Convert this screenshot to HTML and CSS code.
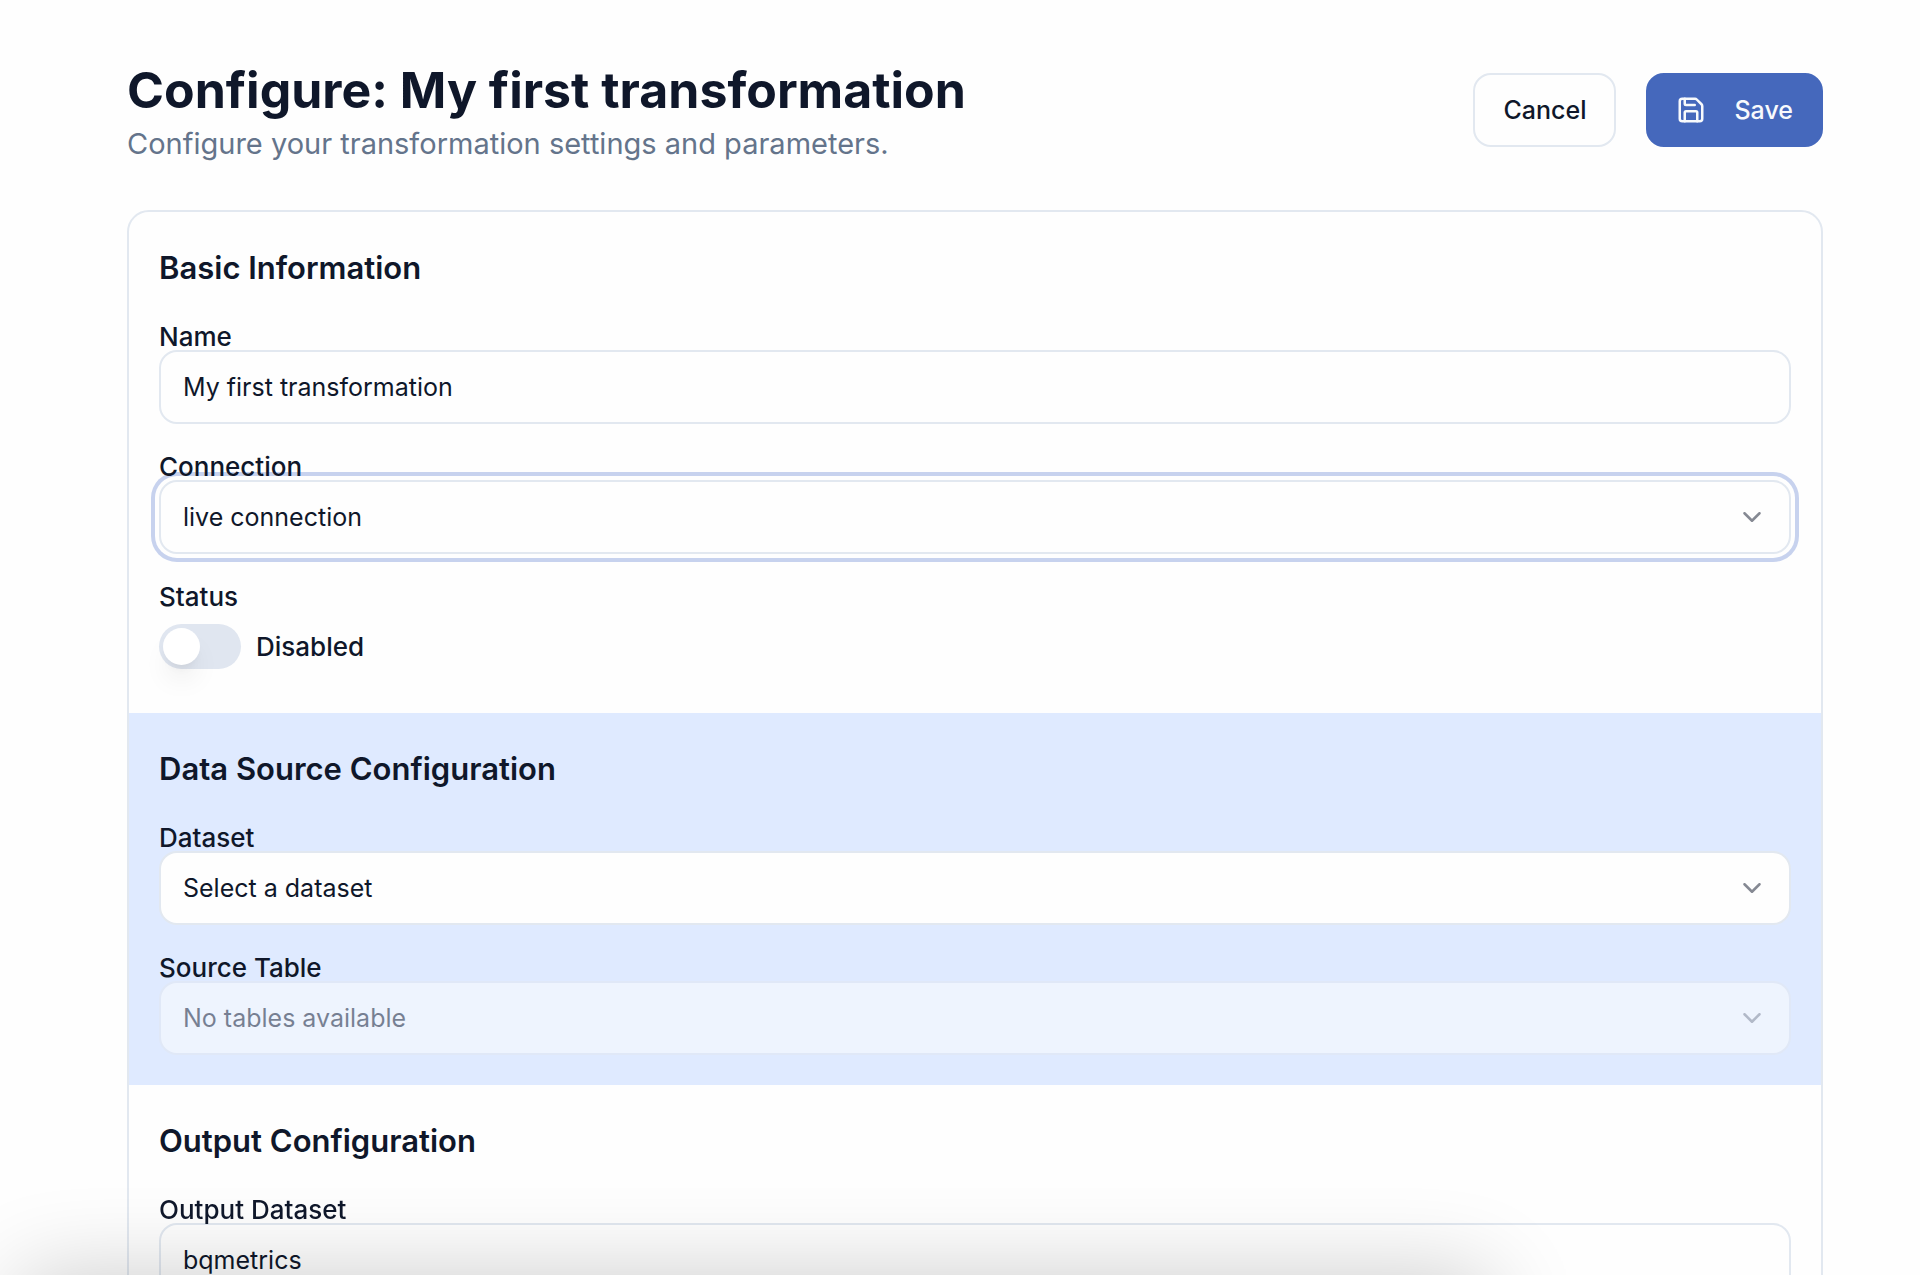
FILE: index.html
```html
<!DOCTYPE html>
<html lang="en">
<head>
  <meta charset="UTF-8" />
  <title>Configure: My first transformation</title>
  <meta name="viewport" content="width=device-width, initial-scale=1.0" />
  <link rel="stylesheet" href="styles.css">
</head>
<body>
  <main class="page">
    <header class="page-header">
      <div class="page-title">
        <h1>Configure: My first transformation</h1>
        <p>Configure your transformation settings and parameters.</p>
      </div>
      <div class="actions">
        <button type="button" class="btn btn-outline">Cancel</button>
        <button type="submit" form="config-form" class="btn btn-primary">
          <svg class="icon" viewBox="0 0 24 24" aria-hidden="true">
            <path d="M15.2 3a2 2 0 0 1 1.4.6l3.8 3.8a2 2 0 0 1 .6 1.4V19a2 2 0 0 1-2 2H5a2 2 0 0 1-2-2V5a2 2 0 0 1 2-2z" />
            <path d="M17 21v-7a1 1 0 0 0-1-1H8a1 1 0 0 0-1 1v7" />
            <path d="M7 3v4a1 1 0 0 0 1 1h7" />
          </svg>
          Save
        </button>
      </div>
    </header>

    <form id="config-form" class="card">
      <section class="section">
        <h2>Basic Information</h2>
        <div class="field">
          <label for="name">Name</label>
          <input type="text" id="name" class="control" value="My first transformation" />
        </div>
        <div class="field">
          <label for="connection">Connection</label>
          <div class="select">
            <select id="connection" class="control active">
              <option>live connection</option>
            </select>
            <svg class="icon chevron" viewBox="0 0 24 24" aria-hidden="true"><path d="m6 9 6 6 6-6" /></svg>
          </div>
        </div>
        <div class="field">
          <label for="status">Status</label>
          <div class="switch-row">
            <input type="checkbox" role="switch" id="status" class="switch" />
            <label for="status">Disabled</label>
          </div>
        </div>
      </section>

      <section class="section section-blue">
        <h2>Data Source Configuration</h2>
        <div class="field">
          <label for="dataset">Dataset</label>
          <div class="select">
            <select id="dataset" class="control">
              <option>Select a dataset</option>
            </select>
            <svg class="icon chevron" viewBox="0 0 24 24" aria-hidden="true"><path d="m6 9 6 6 6-6" /></svg>
          </div>
        </div>
        <div class="field">
          <label for="source-table">Source Table</label>
          <div class="select select-disabled">
            <select id="source-table" class="control" disabled>
              <option>No tables available</option>
            </select>
            <svg class="icon chevron" viewBox="0 0 24 24" aria-hidden="true"><path d="m6 9 6 6 6-6" /></svg>
          </div>
        </div>
      </section>

      <section class="section">
        <h2>Output Configuration</h2>
        <div class="field">
          <label for="output-dataset">Output Dataset</label>
          <input type="text" id="output-dataset" class="control" value="bqmetrics" />
        </div>
      </section>
    </form>
  </main>
  <div class="bottom-shadow"></div>
</body>
</html>
```
FILE: styles.css
```css
* {
  box-sizing: border-box;
}

body {
  margin: 0;
  height: 100vh;
  overflow: hidden;
  background-color: #fefefe;
  color: #0f172a;
  font-family: Inter, "Liberation Sans", sans-serif;
  font-size: 25px;
}

h1, h2, p {
  margin: 0;
}

.page {
  padding: 60px 97px 60px 127px;
}

.page-header {
  display: flex;
  justify-content: space-between;
  align-items: center;
  margin-bottom: 50px;
}

.page-title h1 {
  font-size: 50px;
  line-height: 60px;
  font-weight: 700;
}

.page-title p {
  margin-top: 8px;
  color: #64748b;
  font-size: 29px;
  line-height: 32px;
}

.actions {
  display: flex;
  gap: 30px;
}

.btn {
  display: flex;
  align-items: center;
  gap: 28px;
  height: 74px;
  padding: 0 28px;
  border: 2px solid #e2e8f0;
  border-radius: 18px;
  background-color: #fefefe;
  color: #0f172a;
  font: inherit;
  font-weight: 500;
  cursor: pointer;
}

.btn-primary {
  border-color: #4568bc;
  background-color: #4568bc;
  color: #f8fafc;
}

.icon {
  width: 30px;
  height: 30px;
  fill: none;
  stroke: currentColor;
  stroke-width: 2;
  stroke-linecap: round;
  stroke-linejoin: round;
}

.card {
  border: 2px solid #e2e8f0;
  border-radius: 22px;
}

.section {
  display: flex;
  flex-direction: column;
  gap: 30px;
  padding: 30px;
}

.section-blue {
  background-color: #dfeaff;
}

.section h2 {
  font-size: 31px;
  line-height: 52px;
  font-weight: 600;
}

.field {
  display: flex;
  flex-direction: column;
}

.field label {
  position: relative;
  z-index: 1;
  align-self: flex-start;
  font-size: 26px;
  line-height: 26px;
  font-weight: 500;
}

.control {
  width: 100%;
  height: 74px;
  padding: 0 22px;
  border: 2px solid #e2e8f0;
  border-radius: 18px;
  background-color: #fefefe;
  color: #0f172a;
  font: inherit;
  outline: none;
  appearance: none;
}

.control.active,
.control:focus {
  box-shadow: 0 0 0 4px #fefefe, 0 0 0 8px #c7d2ee;
}

/* select and its chevron share one grid cell */
.select {
  display: grid;
  align-items: center;
}

.select > * {
  grid-area: 1 / 1;
}

.chevron {
  justify-self: end;
  margin-right: 24px;
  opacity: 0.5;
  pointer-events: none;
}

.select-disabled {
  opacity: 0.5;
}

.select-disabled .control {
  opacity: 1;
}

.switch-row {
  display: flex;
  align-items: center;
  gap: 15px;
  padding: 14px 0;
}

.switch-row label {
  align-self: center;
}

.switch {
  display: flex;
  width: 82px;
  height: 45px;
  margin: 0;
  padding: 4px;
  border-radius: 24px;
  background-color: #e0e6f0;
  appearance: none;
  cursor: pointer;
}

.switch::before {
  content: "";
  width: 37px;
  height: 37px;
  border-radius: 50%;
  background-color: #fff;
  box-shadow: 0 18px 28px -6px rgba(0, 0, 0, 0.1), 0 7px 11px -7px rgba(0, 0, 0, 0.1);
}

.switch:checked {
  background-color: #4568bc;
}

.switch:checked::before {
  margin-left: auto;
}

.bottom-shadow {
  position: fixed;
  top: 100%;
  left: 20px;
  right: 430px;
  height: 200px;
  box-shadow: 0 0 90px rgba(0, 0, 0, 0.2);
  pointer-events: none;
}
```
